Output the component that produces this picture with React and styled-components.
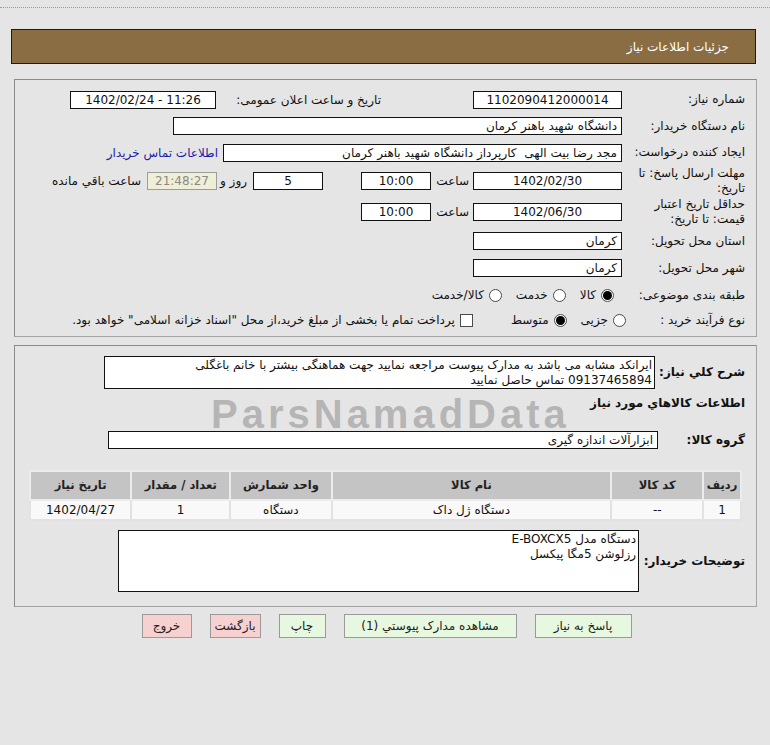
import React from 'react'
import styled, { createGlobalStyle } from 'styled-components'

const GlobalStyle = createGlobalStyle`
  body {
    margin: 0;
    background: #e5e5e5;
    font-family: "DejaVu Sans", Tahoma, sans-serif;
    font-size: 12px;
    color: #111;
  }
`

const Page = styled.div`
  position: relative;
  width: 770px;
  height: 745px;
  overflow: hidden;
  padding-top: 7px;
  box-sizing: border-box;
`

const TopRule = styled.div`
  border-top: 1px dotted #9a9a9a;
`

const Header = styled.div`
  direction: rtl;
  display: flex;
  align-items: center;
  height: 33px;
  margin: 21px 14px 0 11px;
  padding-right: 26px;
  background: #8b6d43;
  border: 1px solid #1e1a14;
  color: #fff;
  font-size: 12px;
`

const Panel = styled.div`
  direction: rtl;
  margin: ${p => p.$top}px 13px 0 14px;
  padding: ${p => p.$pad};
  border: 1px solid #a3a3a3;
  border-top-color: #8a8a8a;
  border-left-color: #8a8a8a;
`

const Row = styled.div`
  display: flex;
  align-items: center;
  height: ${p => p.$h}px;
  margin-top: ${p => p.$mt || 0}px;
`

const Label = styled.div`
  width: ${p => p.$w || 123}px;
  flex-shrink: 0;
  line-height: 15px;
  font-weight: ${p => (p.$bold ? 'bold' : 'normal')};
  white-space: nowrap;
`

const Inline = styled.div`
  width: ${p => p.$w}px;
  flex-shrink: 0;
  margin-right: ${p => p.$mr || 0}px;
  padding-right: ${p => p.$pr || 0}px;
  box-sizing: border-box;
  white-space: nowrap;
`

const Field = styled.div`
  width: ${p => p.$w}px;
  height: ${p => p.$h || 18}px;
  flex-shrink: 0;
  box-sizing: border-box;
  margin-right: ${p => p.$mr || 0}px;
  padding: ${p => (p.$multi ? '1px 2px' : '0 4px')};
  background: ${p => p.$bg || '#fff'};
  border: 1px solid ${p => p.$border || '#111'};
  color: ${p => p.$color || '#111'};
  text-align: ${p => p.$align || 'center'};
  direction: ${p => p.$dir || 'rtl'};
  line-height: ${p => (p.$multi ? '15px' : '16px')};
  white-space: ${p => (p.$multi ? 'normal' : 'pre')};
  overflow: hidden;
`

const Link = styled.a`
  margin-right: 5px;
  color: #1c1ca8;
  text-decoration: none;
  white-space: nowrap;
`

const Options = styled.div`
  display: flex;
  align-items: center;
  gap: 14px;
  margin-right: ${p => p.$mr || 0}px;
`

const Option = styled.label`
  display: flex;
  align-items: center;
  gap: 5px;
  white-space: nowrap;
`

const Radio = styled.span`
  position: relative;
  width: 13px;
  height: 13px;
  border-radius: 50%;
  border: 1px solid #4a4a4a;
  background: #fff;
  box-sizing: border-box;
  flex-shrink: 0;

  &::after {
    content: '';
    display: ${p => (p.$on ? 'block' : 'none')};
    position: absolute;
    inset: 1px;
    border-radius: 50%;
    background: #000;
  }
`

const Check = styled.span`
  width: 13px;
  height: 13px;
  border: 1px solid #4a4a4a;
  background: #fff;
  box-sizing: border-box;
  flex-shrink: 0;
`

const SectionTitle = styled.div`
  margin-top: 6px;
  line-height: 16px;
  font-weight: bold;
`

const Table = styled.table`
  width: 713px;
  margin-right: 3px;
  border-collapse: collapse;
  border: 1px solid #f2f2f2;
`

const Th = styled.th`
  width: ${p => p.$w}px;
  height: 27px;
  padding: 0;
  background: #c4c4c4;
  border: 2px solid #ececec;
  font-size: 11.5px;
  font-weight: bold;
  color: #222;
`

const Td = styled.td`
  height: 18px;
  padding: 0;
  background: #f9f9f9;
  border: 2px solid #e2e2e2;
  text-align: center;
  color: #111;
`

const Buttons = styled.div`
  direction: rtl;
  display: flex;
  justify-content: center;
  gap: 18px;
  margin-top: 7px;
  padding-left: 3px;
`

const Button = styled.button`
  width: ${p => p.$w}px;
  height: 24px;
  padding: 0;
  font-family: inherit;
  font-size: 12px;
  color: #222;
  background: ${p => (p.$danger ? '#f7d0d0' : '#e6f8e0')};
  border: 1px solid #9a9a9a;
  cursor: pointer;
`

const Watermark = styled.div`
  position: absolute;
  left: 211px;
  top: 400px;
  pointer-events: none;
  z-index: 3;
  font-family: "Liberation Sans", Arial, sans-serif;
  font-size: 40px;
  line-height: 28px;
  font-weight: bold;
  letter-spacing: 4px;
  color: rgba(120, 120, 120, 0.45);
  white-space: nowrap;
`

function Choice({ on, children }) {
  return (
    <Option>
      <Radio $on={on} />
      {children}
    </Option>
  )
}

export default function App() {
  return (
    <Page>
      <GlobalStyle />
      <TopRule />
      <Header>جزئیات اطلاعات نیاز</Header>

      <Panel $top={15} $pad="6px 11px 3px 0">
        <Row $h={27}>
          <Label>شماره نیاز:</Label>
          <Field $w={149}>1102090412000014</Field>
          <Inline $w={257} $pr={92}>تاریخ و ساعت اعلان عمومی:</Inline>
          <Field $w={146} $dir="ltr">1402/02/24 - 11:26</Field>
        </Row>
        <Row $h={26}>
          <Label>نام دستگاه خریدار:</Label>
          <Field $w={449} $align="right">دانشگاه شهید باهنر کرمان</Field>
        </Row>
        <Row $h={27}>
          <Label>ایجاد کننده درخواست:</Label>
          <Field $w={399} $align="right">مجد رضا بیت الهی  کارپرداز دانشگاه شهید باهنر کرمان</Field>
          <Link href="#">اطلاعات تماس خریدار</Link>
        </Row>
        <Row $h={29}>
          <Label>مهلت ارسال پاسخ: تا<br />تاریخ:</Label>
          <Field $w={149}>1402/02/30</Field>
          <Inline $w={42} $pr={4}>ساعت</Inline>
          <Field $w={70}>10:00</Field>
          <Field $w={70} $mr={38}>5</Field>
          <Inline $w={36} $pr={6}>روز و</Inline>
          <Field $w={70} $bg="#efeed6" $border="#9c9c9c" $color="#8a8a8a">21:48:27</Field>
          <Inline $mr={6}>ساعت باقي مانده</Inline>
        </Row>
        <Row $h={34}>
          <Label>حداقل تاریخ اعتبار<br />قیمت: تا تاریخ:</Label>
          <Field $w={149}>1402/06/30</Field>
          <Inline $w={42} $pr={4}>ساعت</Inline>
          <Field $w={70}>10:00</Field>
        </Row>
        <Row $h={24}>
          <Label>استان محل تحویل:</Label>
          <Field $w={149} $align="right">کرمان</Field>
        </Row>
        <Row $h={30}>
          <Label>شهر محل تحویل:</Label>
          <Field $w={149} $align="right">کرمان</Field>
        </Row>
        <Row $h={24}>
          <Label>طبقه بندی موضوعی:</Label>
          <Options $mr={8}>
            <Choice on>کالا</Choice>
            <Choice>خدمت</Choice>
            <Choice>کالا/خدمت</Choice>
          </Options>
        </Row>
        <Row $h={26}>
          <Label>نوع فرآیند خرید :</Label>
          <Options $mr={-4}>
            <Choice>جزیی</Choice>
            <Choice on>متوسط</Choice>
          </Options>
          <Options $mr={38}>
            <Option>
              <Check />
              پرداخت تمام یا بخشی از مبلغ خرید،از محل "اسناد خزانه اسلامی" خواهد بود.
            </Option>
          </Options>
        </Row>
      </Panel>

      <Panel $top={8} $pad="10px 11px 14px 0">
        <Row $h={33}>
          <Label $w={90} $bold>شرح کلي نیاز:</Label>
          <Field $w={551} $h={33} $align="right" $multi>
            ایرانکد مشابه می باشد به مدارک پیوست مراجعه نمایید جهت هماهنگی بیشتر با خانم باغگلی
            <br />
            09137465894 تماس حاصل نمایید
          </Field>
        </Row>
        <SectionTitle>اطلاعات کالاهاي مورد نیاز</SectionTitle>
        <Row $h={18} $mt={20}>
          <Label $w={87} $bold>گروه کالا:</Label>
          <Field $w={550} $align="right">ابزارآلات اندازه گیری</Field>
        </Row>
        <Row $h={48} $mt={22}>
          <Table>
            <thead>
              <tr>
                <Th $w={36}>ردیف</Th>
                <Th $w={92}>کد کالا</Th>
                <Th $w={285}>نام کالا</Th>
                <Th $w={101}>واحد شمارش</Th>
                <Th $w={99}>تعداد / مقدار</Th>
                <Th $w={100}>تاریخ نیاز</Th>
              </tr>
            </thead>
            <tbody>
              <tr>
                <Td>1</Td>
                <Td>--</Td>
                <Td>دستگاه ژل داک</Td>
                <Td>دستگاه</Td>
                <Td>1</Td>
                <Td>1402/04/27</Td>
              </tr>
            </tbody>
          </Table>
        </Row>
        <Row $h={62} $mt={11}>
          <Label $w={106} $bold>توضیحات خریدار:</Label>
          <Field $w={521} $h={62} $align="right" $multi>
            دستگاه مدل E-BOXCX5
            <br />
            رزلوشن 5مگا پیکسل
          </Field>
        </Row>
      </Panel>

      <Buttons>
        <Button $w={97}>پاسخ به نیاز</Button>
        <Button $w={173}>مشاهده مدارک پیوستي (1)</Button>
        <Button $w={47}>چاپ</Button>
        <Button $w={51} $danger>بازگشت</Button>
        <Button $w={50} $danger>خروج</Button>
      </Buttons>

      <Watermark>ParsNamadData</Watermark>
    </Page>
  )
}
